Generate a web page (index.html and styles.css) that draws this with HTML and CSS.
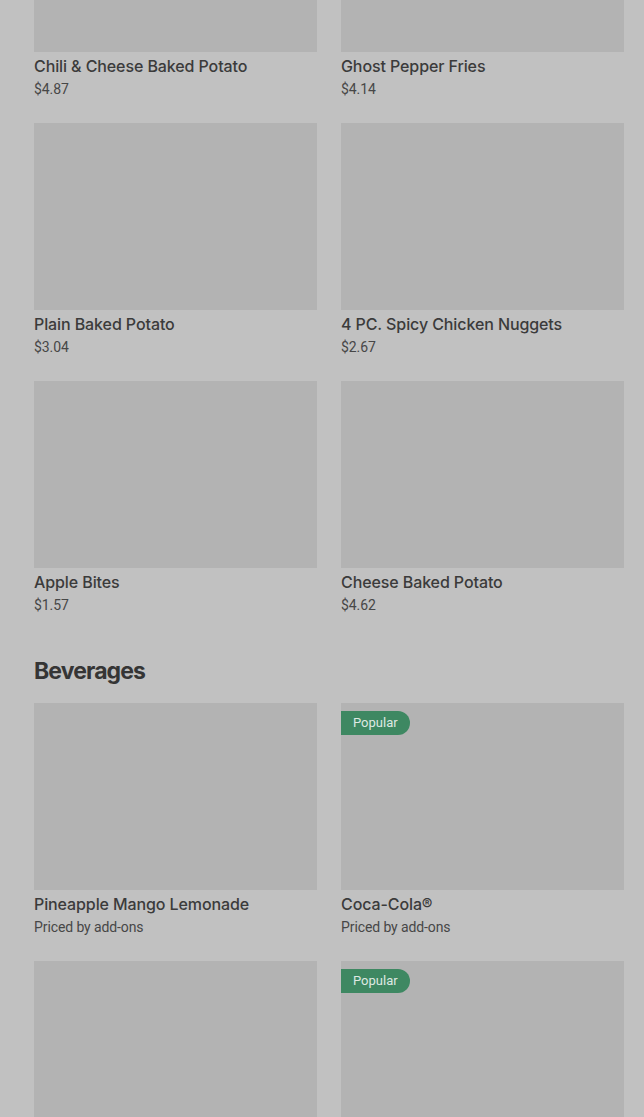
FILE: index.html
```html
<!DOCTYPE html>
<html lang="en">
<head>
<meta charset="utf-8">
<title>Menu</title>
<link rel="stylesheet" href="styles.css">
</head>
<body>
<main class="page">
  <section class="section first">
    <div class="grid">
      <div class="card"><div class="thumb"></div><div class="name">Chili &amp; Cheese Baked Potato</div><div class="price">$4.87</div></div>
      <div class="card"><div class="thumb"></div><div class="name">Ghost Pepper Fries</div><div class="price">$4.14</div></div>
      <div class="card"><div class="thumb"></div><div class="name">Plain Baked Potato</div><div class="price">$3.04</div></div>
      <div class="card"><div class="thumb"></div><div class="name">4 PC. Spicy Chicken Nuggets</div><div class="price">$2.67</div></div>
      <div class="card"><div class="thumb"></div><div class="name">Apple Bites</div><div class="price">$1.57</div></div>
      <div class="card"><div class="thumb"></div><div class="name">Cheese Baked Potato</div><div class="price">$4.62</div></div>
    </div>
  </section>
  <section class="section">
    <h2 class="heading">Beverages</h2>
    <div class="grid">
      <div class="card"><div class="thumb"></div><div class="name">Pineapple Mango Lemonade</div><div class="price">Priced by add-ons</div></div>
      <div class="card"><div class="thumb"><span class="badge">Popular</span></div><div class="name">Coca-Cola®</div><div class="price">Priced by add-ons</div></div>
      <div class="card"><div class="thumb"></div><div class="name">&nbsp;</div><div class="price">&nbsp;</div></div>
      <div class="card"><div class="thumb"><span class="badge">Popular</span></div><div class="name">&nbsp;</div><div class="price">&nbsp;</div></div>
    </div>
  </section>
</main>
</body>
</html>
```
FILE: styles.css
```css
html, body {
  margin: 0;
  padding: 0;
  background: #c1c1c1;
  overflow: hidden;
}
body {
  font-family: "Inter", "Roboto", "Liberation Sans", sans-serif;
  color: #3a3a3a;
}
.page {
  padding: 0 20px 0 34px;
  margin-top: -135px;
}
.section + .section {
  margin-top: 40px;
}
.grid {
  display: grid;
  grid-template-columns: 283px 283px;
  column-gap: 24px;
  row-gap: 24px;
}
.card {
  display: flex;
  flex-direction: column;
}
.thumb {
  position: relative;
  height: 187px;
  background: #b3b3b3;
}
.name {
  margin-top: 2px;
  font-size: 16px;
  font-weight: 500;
  line-height: 24px;
  color: #3b3b3b;
  letter-spacing: -0.1px;
}
.price {
  margin-top: 1px;
  font-family: "Roboto", "Liberation Sans", sans-serif;
  font-size: 14px;
  line-height: 20px;
  color: #474747;
  letter-spacing: -0.1px;
}
.heading {
  margin: 0 0 16px;
  font-size: 23px;
  line-height: 32px;
  font-weight: 700;
  color: #353535;
  letter-spacing: -0.9px;
}
.badge {
  position: absolute;
  left: 0;
  top: 8px;
  height: 24px;
  line-height: 24px;
  padding: 0 12px;
  background: #3e8862;
  color: #dfe9e3;
  font-family: "Roboto", "Liberation Sans", sans-serif;
  font-size: 13px;
  border-radius: 0 12px 12px 0;
}
```
